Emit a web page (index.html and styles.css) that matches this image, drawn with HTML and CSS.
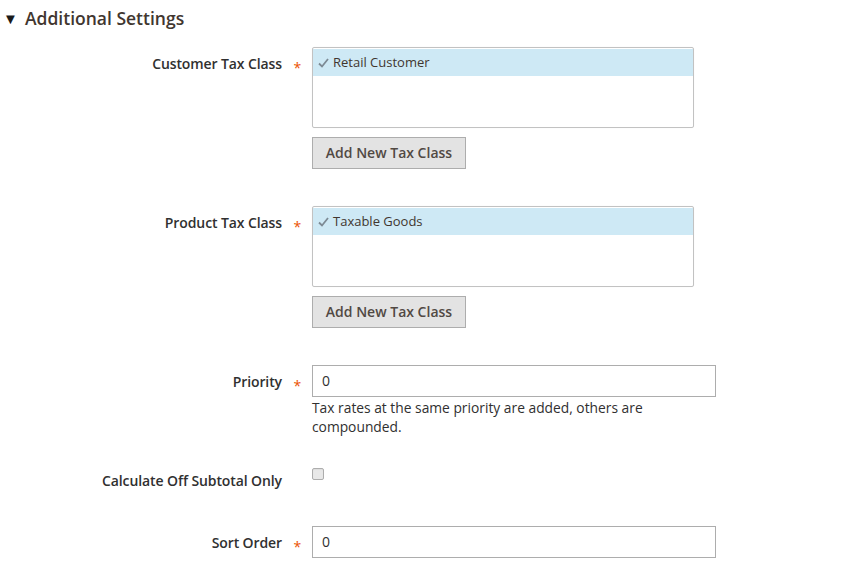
FILE: index.html
```html
<!DOCTYPE html>
<html>
<head>
<meta charset="utf-8">
<link rel="stylesheet" href="styles.css">
</head>
<body>
<div class="section">
  <div class="section-title"><span class="caret">&#9660;</span><span>Additional Settings</span></div>

  <div class="field field-multi">
    <label class="label required">Customer Tax Class</label>
    <div class="control">
      <div class="multiselect">
        <div class="option selected"><svg class="check" width="11" height="10" viewBox="0 0 11 10"><path d="M1 5.5 L4 8.5 L10 1" fill="none" stroke="#7d8a94" stroke-width="1.8"/></svg>Retail Customer</div>
      </div>
      <button class="btn">Add New Tax Class</button>
    </div>
  </div>

  <div class="field field-multi second">
    <label class="label required">Product Tax Class</label>
    <div class="control">
      <div class="multiselect">
        <div class="option selected"><svg class="check" width="11" height="10" viewBox="0 0 11 10"><path d="M1 5.5 L4 8.5 L10 1" fill="none" stroke="#7d8a94" stroke-width="1.8"/></svg>Taxable Goods</div>
      </div>
      <button class="btn">Add New Tax Class</button>
    </div>
  </div>

  <div class="field field-input priority">
    <label class="label required">Priority</label>
    <div class="control">
      <div class="input">0</div>
      <div class="note">Tax rates at the same priority are added, others are compounded.</div>
    </div>
  </div>

  <div class="field field-check">
    <label class="label">Calculate Off Subtotal Only</label>
    <div class="control">
      <span class="checkbox"></span>
    </div>
  </div>

  <div class="field field-input sort">
    <label class="label required">Sort Order</label>
    <div class="control">
      <div class="input">0</div>
    </div>
  </div>
</div>
</body>
</html>
```

FILE: styles.css
```css
html, body {
  margin: 0;
  padding: 0;
  background: #ffffff;
}
body {
  font-family: "Open Sans", "Noto Sans", sans-serif;
  color: #303030;
  width: 854px;
  height: 568px;
  overflow: hidden;
}
.section {
  padding-top: 7px;
}
.section-title {
  display: flex;
  align-items: center;
  height: 22px;
  font-size: 17.5px;
  font-weight: 600;
  color: #41362f;
}
.caret {
  font-size: 15px;
  width: 25px;
  padding-left: 3px;
  box-sizing: border-box;
  color: #1a1a1a;
}
.field {
  display: flex;
  align-items: flex-start;
}
.label {
  width: 282px;
  flex: none;
  text-align: right;
  font-size: 14px;
  letter-spacing: -0.1px;
  font-weight: 600;
  color: #303030;
  position: relative;
  box-sizing: border-box;
}
.label.required::after {
  content: "*";
  color: #eb5202;
  font-size: 14px;
  font-weight: 400;
  position: absolute;
  right: -19px;
  top: 11px;
}
.control {
  margin-left: 30px;
  display: flex;
  flex-direction: column;
  align-items: flex-start;
}
.field-multi {
  margin-top: 18px;
}
.field-multi.second {
  margin-top: 37px;
}
.field-multi .label {
  padding-top: 7px;
}
.multiselect {
  width: 380px;
  height: 78px;
  border: 1px solid #c2c2c2;
  border-radius: 2px;
  box-shadow: 0 0 1px rgba(0,0,0,0.08);
  padding-top: 1px;
  box-sizing: content-box;
}
.option {
  height: 27px;
  line-height: 27px;
  font-size: 13px;
  color: #41362f;
  padding-left: 5px;
  display: flex;
  align-items: center;
}
.option.selected {
  background: #cee9f5;
}
.check {
  margin-right: 4px;
  margin-top: 1px;
}
.btn {
  margin-top: 9px;
  width: 154px;
  height: 32px;
  background: #e3e3e3;
  border: 1px solid #adadad;
  border-radius: 0;
  font-family: "Open Sans", "Noto Sans", sans-serif;
  font-size: 14px;
  font-weight: 600;
  color: #514943;
  padding: 0 0 2px;
}
.field-input .label {
  padding-top: 7px;
}
.priority {
  margin-top: 37px;
}
.input {
  width: 393px;
  height: 30px;
  line-height: 30px;
  border: 1px solid #adadad;
  font-size: 14px;
  color: #303030;
  padding-left: 9px;
  box-sizing: content-box;
}
.note {
  width: 360px;
  font-size: 13.8px;
  line-height: 19px;
  color: #303030;
  margin-top: 1px;
}
.field-check {
  margin-top: 31px;
}
.field-check .label {
  padding-top: 4px;
}
.checkbox {
  display: block;
  width: 10px;
  height: 10px;
  border: 1px solid #adadad;
  border-radius: 2px;
  background: #e8e8e8;
  box-shadow: inset 0 1px 1px rgba(0,0,0,0.05);
  margin-left: 0;
  margin-top: 1px;
}
.sort {
  margin-top: 36px;
}
```
